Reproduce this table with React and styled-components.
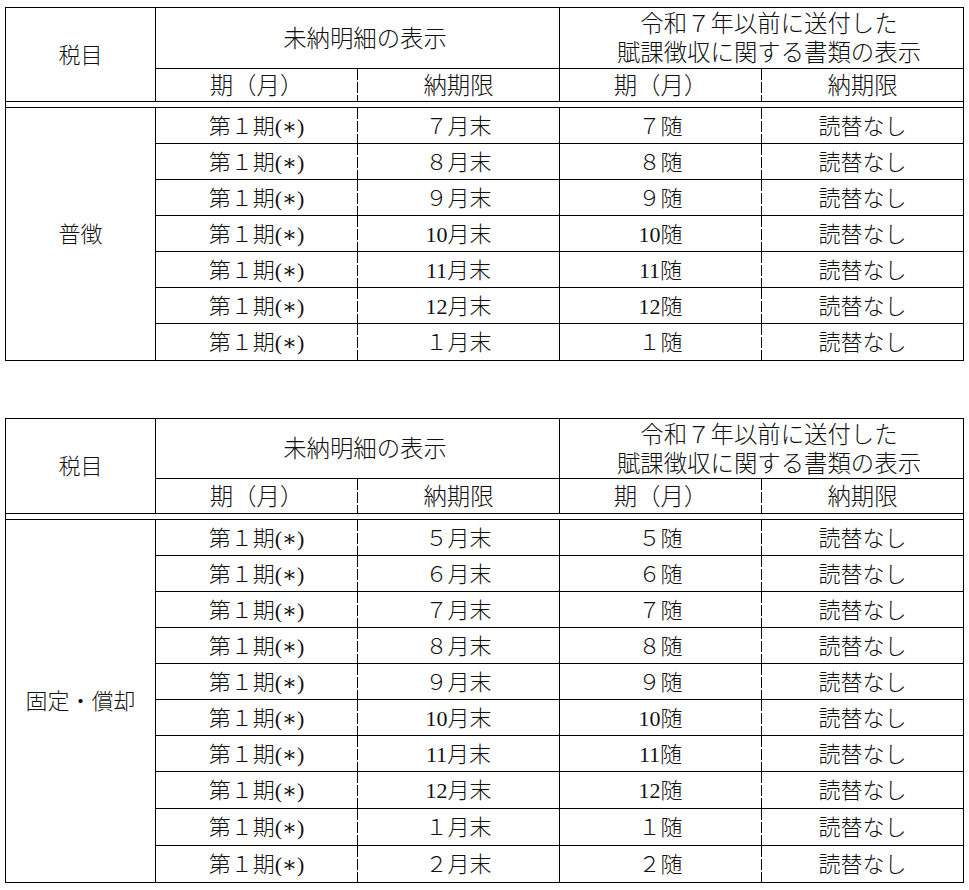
import React from "react"
import styled, { createGlobalStyle, css } from "styled-components"

/**
 * GLOBAL
 */

const GlobalStyle = createGlobalStyle`
  html, body {
    margin: 0;
    padding: 0;
    background: #fff;
  }
  body {
    font-family: "Liberation Serif", "DejaVu Serif", "Noto Sans CJK JP", serif;
    font-weight: 300;
    color: #111;
  }
`

/**
 * STYLED COMPONENTS
 */

const Sheet = styled.main`
  display: flex;
  flex-direction: column;
  gap: 57px;
  padding: 7px 0 0 5px;
`

const Grid = styled.section`
  display: grid;
  width: 959px;
  box-sizing: border-box;
  grid-template-columns: 150px repeat(4, 202px);
  grid-template-rows: ${(p) => p.$rows};
  border-right: 1px solid #000;
  border-bottom: 1px solid #000;
`

const Cell = styled.div`
  box-sizing: border-box;
  display: flex;
  align-items: center;
  justify-content: center;
  text-align: center;
  font-size: ${(p) => (p.$head ? "23.4px" : "22px")};
  line-height: 29px;
  padding-top: ${(p) => (p.$head ? "2px" : "1px")};
  padding-left: ${(p) => (p.$cols > 1 ? "15px" : "0")};
  white-space: nowrap;
  border-left: 1px solid #000;
  border-top: 1px solid #000;
  grid-column: span ${(p) => p.$cols || 1};
  grid-row: span ${(p) => p.$span || 1};
  ${(p) =>
    p.$dashed &&
    css`
      border-left: none;
      padding-left: 1px;
      background: linear-gradient(to bottom, #000 0 11px, transparent 11px 13px)
        left top / 1px 13px repeat-y;
    `}
`

const Spacer = styled.div`
  grid-column: 1 / -1;
  border-left: 1px solid #000;
  border-top: 1px solid #000;
`

/**
 * HELPERS
 */

const wide = (n) =>
  n < 10 ? String.fromCharCode(0xff10 + n) : String(n)

// split a total height into n whole-pixel rows
const rowHeights = (total, n) => {
  const base = Math.floor(total / n)
  const extra = total - base * n
  return Array.from({ length: n }, (_, i) =>
    i >= n - extra ? `${base + 1}px` : `${base}px`
  ).join(" ")
}

const TaxTable = ({ label, months, head, bodyHeight }) => (
  <Grid $rows={`${head} 6px ${rowHeights(bodyHeight, months.length)}`}>
    <Cell $span={2}>税目</Cell>
    <Cell $cols={2} $head>
      未納明細の表示
    </Cell>
    <Cell $cols={2} $head>
      令和７年以前に送付した
      <br />
      賦課徴収に関する書類の表示
    </Cell>
    <Cell $head>期（月）</Cell>
    <Cell $head $dashed>
      納期限
    </Cell>
    <Cell $head>期（月）</Cell>
    <Cell $head $dashed>
      納期限
    </Cell>
    <Spacer />
    <Cell $span={months.length}>{label}</Cell>
    {months.map((m, i) => (
      <React.Fragment key={i}>
        <Cell>第１期(∗)</Cell>
        <Cell $dashed>{wide(m)}月末</Cell>
        <Cell>{wide(m)}随</Cell>
        <Cell $dashed>読替なし</Cell>
      </React.Fragment>
    ))}
  </Grid>
)

/**
 * MAIN COMPONENT
 */

const App = () => (
  <>
    <GlobalStyle />
    <Sheet>
      <TaxTable
        label="普徴"
        months={[7, 8, 9, 10, 11, 12, 1]}
        head="61px 33px"
        bodyHeight={253}
      />
      <TaxTable
        label="固定・償却"
        months={[5, 6, 7, 8, 9, 10, 11, 12, 1, 2]}
        head="60px 35px"
        bodyHeight={363}
      />
    </Sheet>
  </>
)

export default App
